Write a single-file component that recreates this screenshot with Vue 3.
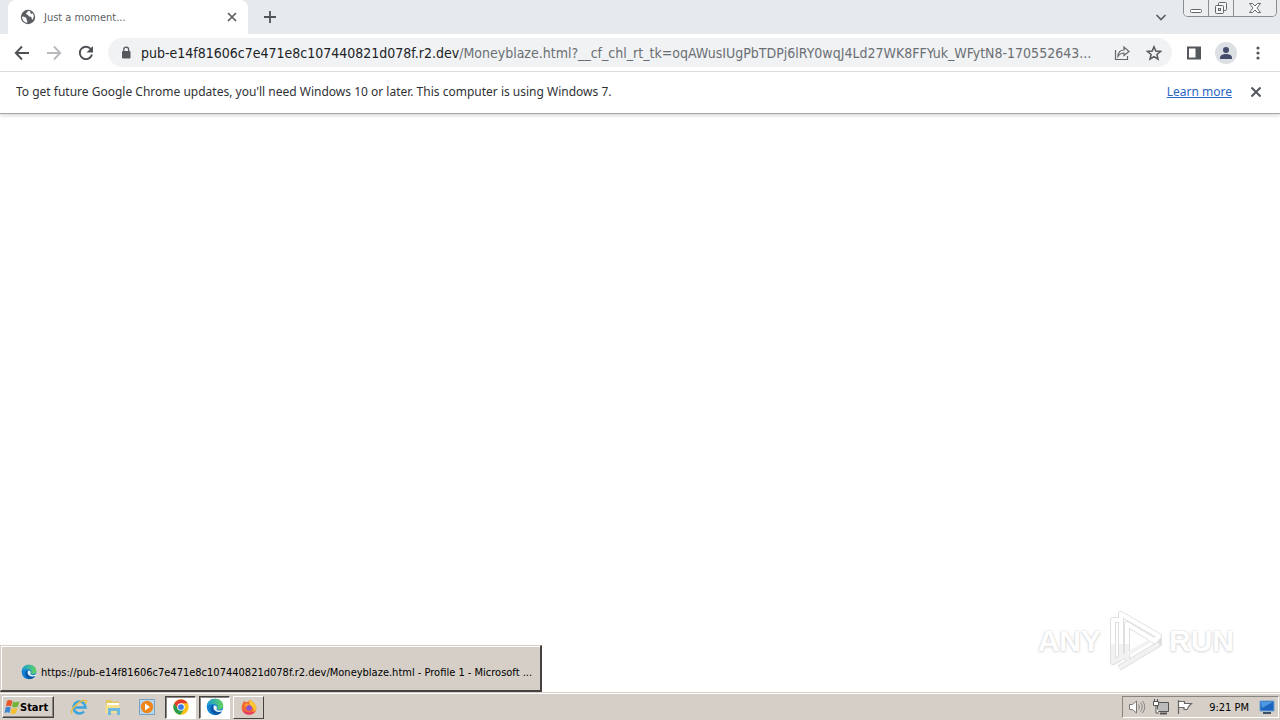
<script setup>
const host = 'pub-e14f81606c7e471e8c107440821d078f.r2.dev'
const path = '/Moneyblaze.html?__cf_chl_rt_tk=oqAWusIUgPbTDPj6lRY0wqJ4Ld27WK8FFYuk_WFytN8-170552643...'
</script>

<template>
  <div class="screen">
    <header class="tabs">
      <div class="tab">
        <svg class="globe" width="16" height="16" viewBox="0 0 16 16"><circle cx="8" cy="8" r="7.2" fill="#5a5e62" /><path d="M2.200 7.500c2 .2 4.600 1 4.300 2.500-.2 1 1 .8.8 3.700C4 13.500 2 11 2.200 7.500zM8 2c-.2 1.500-2 1.300-2 2.800 0 1.200 1.800.5 2.300 1.700.5 1.300 2.500.7 3.200 2 .4.8 0 2 1 2.300 1.700-2.300 1.500-5 .3-6.500-.8.6-1.700.8-2.200.1C10.200 3.700 10.500 2.800 10 2.300 9.300 2 8.600 1.900 8 2z" fill="#fff" /></svg>
        <span class="tab-title">Just a moment...</span>
        <button class="bare" aria-label="Close tab"><svg width="16" height="16" viewBox="0 0 16 16"><path d="M4 4l8 8M12 4l-8 8" stroke="#5a5e62" stroke-width="1.700" /></svg></button>
      </div>
      <button class="bare new" aria-label="New tab"><svg width="16" height="16" viewBox="0 0 16 16"><path d="M8 2v12M2 8h12" stroke="#505458" stroke-width="1.800" /></svg></button>
      <button class="bare search" aria-label="Search tabs"><svg width="16" height="16" viewBox="0 0 16 16"><path d="M3.500 6l4.500 4.500L12.500 6" fill="none" stroke="#5a5e62" stroke-width="1.700" /></svg></button>
      <div class="controls">
        <button aria-label="Minimize"><svg width="14" height="14" viewBox="0 0 14 14"><rect x="1.500" y="8.500" width="11" height="3" rx="1" fill="#fff" stroke="#63676b" /></svg></button>
        <button aria-label="Restore"><svg width="14" height="14" viewBox="0 0 14 14"><g fill="#f4f5f6" stroke="#63676b"><rect x="4.500" y="1.500" width="8" height="8" rx="1" /><rect x="1.500" y="4.500" width="8" height="8" rx="1" /><rect x="4.500" y="7.500" width="2" height="2" /></g></svg></button>
        <button aria-label="Close"><svg width="14" height="14" viewBox="0 0 14 14"><path d="M1.500 2.500h3L7 5l2.500-2.500h3L9 7l3.500 4.500h-3L7 9l-2.500 2.500h-3L5 7z" fill="#fff" stroke="#63676b" /></svg></button>
      </div>
    </header>

    <nav class="toolbar">
      <button class="bare" aria-label="Back"><svg width="16" height="16" viewBox="0 0 16 16"><path d="M15 8H2M8 1.500L1.800 8 8 14.500" fill="none" stroke="#4e5256" stroke-width="1.900" /></svg></button>
      <button class="bare" aria-label="Forward"><svg width="16" height="16" viewBox="0 0 16 16"><path d="M1 8h13M8 1.500L14.200 8 8 14.500" fill="none" stroke="#b8babd" stroke-width="1.900" /></svg></button>
      <button class="bare" aria-label="Reload"><svg width="16" height="16" viewBox="0 0 16 16"><path d="M13.200 4.500A6.200 6.200 0 1 0 14 9.500" fill="none" stroke="#4e5256" stroke-width="1.900" /><path d="M15 1v6.500H8.500z" fill="#4e5256" /></svg></button>
      <div class="omnibox">
        <svg class="lock" width="12" height="14" viewBox="0 0 12 14"><rect x="2" y="5" width="8.500" height="7.500" rx="1" fill="#55595d" /><path d="M3.800 6V3.600a2.400 2.400 0 0 1 4.800 0V6" fill="none" stroke="#55595d" stroke-width="1.300" /></svg>
        <span class="url"><b>{{ host }}</b>{{ path }}</span>
        <button class="bare share" aria-label="Share"><svg width="16" height="16" viewBox="0 0 16 16"><path d="M1.500 5v9.500h12V11M4 11.500C4 7 6.500 5 10 5V2l5 4.500-5 4V8C7.500 8 5.500 9 4 11.500z" fill="none" stroke="#63676b" stroke-width="1.200" /></svg></button>
        <button class="bare" aria-label="Bookmark"><svg width="16" height="16" viewBox="0 0 16 16"><path d="M8 1.800l1.800 4.300 4.700.4-3.600 3 1.100 4.700L8 11.700l-4 2.500 1.100-4.700-3.600-3 4.700-.4z" fill="none" stroke="#55595d" stroke-width="1.500" /></svg></button>
      </div>
      <button class="bare panel" aria-label="Side panel"><svg width="16" height="16" viewBox="0 0 16 16"><path d="M2 2.500h12v11H2z" fill="#fff" stroke="#55595d" stroke-width="2" /><path d="M9.500 2h5v12h-5z" fill="#55595d" /></svg></button>
      <button class="bare avatar" aria-label="Profile"><svg width="22" height="22" viewBox="0 0 22 22"><circle cx="11" cy="11" r="11" fill="#dcdfe3" /><circle cx="11" cy="8" r="3" fill="#434c6b" /><path d="M5 17v-1.500c0-2.500 3.500-3.500 6-3.500s6 1 6 3.500V17z" fill="#434c6b" /></svg></button>
      <button class="bare dots" aria-label="Menu"><svg width="16" height="16" viewBox="0 0 16 16"><g fill="#55595d"><circle cx="8" cy="3" r="1.600" /><circle cx="8" cy="8" r="1.600" /><circle cx="8" cy="13" r="1.600" /></g></svg></button>
    </nav>

    <div class="infobar">
      <span class="message">To get future Google Chrome updates, you'll need Windows 10 or later. This computer is using Windows 7.</span>
      <a href="#">Learn more</a>
      <button class="bare" aria-label="Dismiss"><svg width="16" height="16" viewBox="0 0 16 16"><path d="M3.500 3.500l9 9M12.500 3.500l-9 9" stroke="#505458" stroke-width="1.900" /></svg></button>
    </div>

    <main class="page">
      <div class="preview">
        <svg width="16" height="16" viewBox="0 0 24 24"><use href="#edge" /></svg>
        <span>https://pub-e14f81606c7e471e8c107440821d078f.r2.dev/Moneyblaze.html - Profile 1 - Microsoft ...</span>
      </div>
      <div class="watermark">
        <span>ANY</span>
        <svg width="60" height="66" viewBox="0 0 60 66"><g fill="none" stroke-linejoin="round"><g stroke="#dfdfdf" stroke-width="6"><path d="M16 52V6l38 22-4 5-28-17v36M14 12H8v42l8-4M14 60l40-24v-6" /></g><g stroke="#f2f2f2" stroke-width="4"><path d="M16 52V6l38 22-4 5-28-17v36M14 12H8v42l8-4 34-20M14 60l40-24" /></g><path d="M16 36V6l38 22-4 5-28-17v20M14 12H8v24" stroke="#fff" stroke-width="4" /></g></svg>
        <span>RUN</span>
      </div>
    </main>

    <footer class="taskbar">
      <button class="start">
        <svg width="16" height="16" viewBox="0 0 16 16"><path d="M3 2c2-1.500 3.500-1 5.500 0L7 7.500c-1.500-1-3-1-5 0z" fill="#e8572a" /><path d="M9 2.500c2 1 3.500 1 6.500-.5l-1.500 5.500C11.500 9 10 8.700 8 7.800z" fill="#76b53b" /><path d="M1.700 8.500c2-1.200 3.500-1 5 0L5.500 14c-1.500-1-3-1-5 0z" fill="#3c86d2" /><path d="M7.700 9c2 1 3.500 1 5.800-.3L12 14c-2 1.300-3.600 1.300-5.500.3z" fill="#f6c02c" /></svg>
        Start
      </button>
      <div class="quick">
        <button class="bare" aria-label="Internet Explorer"><svg width="18" height="18" viewBox="0 0 18 18"><path d="M4.500 9.500h11A6 6 0 1 0 14 13.500" fill="none" stroke="#3aa4dd" stroke-width="2.600" /><path d="M2 15.500C-1 12 11 1 16 2.500c1 .5.500 2-.5 3.500" fill="none" stroke="#e8bd48" stroke-width="1.500" /></svg></button>
        <button class="bare" aria-label="Explorer"><svg width="18" height="18" viewBox="0 0 18 18"><path d="M2 2h5l1 1.500h7V14H2z" fill="#e6c65e" /><path d="M3 5h12v2H3z" fill="#fff" /><path d="M1.500 7h14v8h-14z" fill="#f7df8b" /><path d="M4 17v-7h12v7h-3v-4H7v4z" fill="#6db9df" /></svg></button>
        <button class="bare" aria-label="Media Player"><svg width="18" height="18" viewBox="0 0 18 18"><path d="M1.500 1.500h15v15h-15z" fill="#b9d6ed" stroke="#73a2c8" /><circle cx="9" cy="9" r="6.200" fill="#ef861b" /><path d="M7 5.500v7L12 9z" fill="#fff" /></svg></button>
      </div>
      <button class="task active" aria-label="Chrome"><svg width="16" height="16" viewBox="0 0 24 24"><circle cx="12" cy="12" r="11.500" fill="#fbc116" /><path d="M2 6.300A11.500 11.500 0 0 0 11 23.500l6-9-10-1z" fill="#2b9e4b" /><path d="M2 6.300l5 8L12 6.500h10A11.500 11.500 0 0 0 2 6.300z" fill="#e33b2e" /><circle cx="12" cy="12" r="5.700" fill="#fff" /><circle cx="12" cy="12" r="4.300" fill="#397ce7" /></svg></button>
      <button class="task active" aria-label="Edge"><svg width="18" height="18" viewBox="0 0 24 24">
        <defs>
          <linearGradient id="edge-top" x1="0" x2="1"><stop offset="0" stop-color="#199bd8" /><stop offset="1" stop-color="#63d45a" /></linearGradient>
          <g id="edge"><circle cx="12" cy="12" r="11" fill="#1380d2" /><path d="M1 12C1 5 6 1 12 1c7 0 11 5 11 9 0 5-5 6.500-8.500 5 2-3 .5-7-4-7C5.500 8 2 9 1 12z" fill="url(#edge-top)" /><path d="M8 10c-5 6 1 14 8 12 2.500-.8 4.500-2.500 5.500-4.500C15 20 8.500 16 10 10z" fill="#0c58a8" /><path d="M11 10c2.500-.5 4.200 1.800 3.200 4.200-.8 2 2.500 3 5.500 2.300l3.300-1v2l-2 .5c-5 2-11-1-11-5 0-1.500.3-2.400 1-3z" fill="#e9f3f7" /></g>
        </defs><use href="#edge" /></svg></button>
      <button class="task" aria-label="Firefox"><svg width="16" height="16" viewBox="0 0 24 24"><path d="M3 6l1.500-3L8 5c2-1 4-1 5-4 5 3 10 7 10 13 0 6-5 9.500-11 9.500S1 19 1 13c0-3 .8-5 2-7z" fill="#f36a32" /><path d="M13 1c5 3 10 7 10 13 0 4-3 7.500-6 8.500 4-6 1-10-2-12-2-1.500-4-5-2-9.500z" fill="#fcc632" /><path d="M1.500 16C4 22 9 24 14 23.300 19 22.500 22 19 23 15c-2 4-6 6-11 5s-8-2-10.500-4z" fill="#e93c6d" /><circle cx="12" cy="13.500" r="4.200" fill="#8754d5" /><path d="M5 8c3-2 6-1 8 1-3 0-4 1-4 3-2 0-4-2-4-4z" fill="#fc9a33" /></svg></button>
      <div class="tray">
        <svg width="18" height="16" viewBox="0 0 18 16"><path d="M1.500 5.500h3L8.500 2v12l-4-3.500h-3z" fill="#fff" stroke="#777" /><path d="M10.500 5.500q2 2.500 0 5M12.500 3.500q3.500 4.500 0 9M14.500 2q4.500 6 0 12" fill="none" stroke="#888" /></svg>
        <svg width="18" height="16" viewBox="0 0 18 16"><path d="M5.500 3.500h11v9h-11z" fill="#bbb" stroke="#555" /><path d="M8 14.500h7" stroke="#555" stroke-width="2" /><path d="M1.500 2.500h5v4h-5zM2.500 0v2M5.500 0v2M4 7v7h3" fill="#fff" stroke="#555" /></svg>
        <svg width="18" height="16" viewBox="0 0 18 16"><path d="M2.500 1v14M2.500 2.500h6v2h7L13 7l-2 3.500H8V8.500H2.500" fill="#fff" stroke="#666" stroke-width="1.200" /></svg>
        <time>9:21 PM</time>
        <svg width="16" height="16" viewBox="0 0 16 16"><path d="M1 2h14v10H1z" fill="#1c64bd" stroke="#6da2d5" /><path d="M2 3h12L3 9z" fill="#4e9ae2" /><path d="M4 13h8v2H4z" fill="#3c4e68" /></svg>
      </div>
    </footer>
  </div>
</template>

<style>
body { margin: 0; }
</style>

<style scoped>
* { box-sizing: border-box; }
.screen { display: flex; flex-direction: column; min-height: 100vh; background: #fff; color: #303236; font-family: "DejaVu Sans Condensed", "DejaVu Sans", sans-serif; }
svg { display: block; flex: none; }
button { font: inherit; color: inherit; }
.bare { display: flex; flex: none; padding: 0; border: 0; background: none; }
.tabs { display: flex; height: 34px; background: #e7eaed; align-items: center; }
.tab { display: flex; align-items: center; align-self: stretch; width: 240px; margin-left: 8px; padding: 0 8px 0 12px; background: #fff; border-radius: 8px 8px 0 0; font-size: 11px; }
.tab-title { flex: 1; margin-left: 8px; color: #5c5f63; }
.new { margin-left: 14px; }
.search { margin-left: auto; margin-right: 14px; }
.controls { display: flex; align-self: flex-start; width: 94px; height: 17px; margin-right: 3px; border: 1px solid #8b8e91; border-top: 0; border-radius: 0 0 5px 5px; overflow: hidden; }
.controls button { display: flex; justify-content: center; align-items: center; flex: 1; padding: 0; border: 0; border-right: 1px solid #8b8e91; background: #eceef0; }
.controls button:last-child { flex: 0 0 42px; border-right: 0; }
.toolbar { display: flex; align-items: center; height: 38px; padding: 0 14px; gap: 16px; border-bottom: 1px solid #d9dbdd; }
.omnibox { display: flex; align-items: center; flex: 1; min-width: 0; height: 29px; margin-left: -2px; padding: 0 10px 0 12px; border-radius: 15px; background: #f0f2f4; }
.url { flex: 1; min-width: 0; margin-left: 9px; overflow: hidden; white-space: nowrap; font-size: 14px; color: #6b6f73; }
.url b { font-weight: 400; color: #202226; }
.share { margin-right: 16px; }
.panel { margin-left: -2px; }
.avatar { margin: 0 -3px; }
.infobar { display: flex; align-items: center; height: 42px; padding: 0 16px 2px; font: 12px "Noto Sans", sans-serif; border-bottom: 1px solid #a5a7a9; box-shadow: 0 2px 3px #ddd; }
.message { flex: 1; white-space: nowrap; }
.infobar a { margin-right: 16px; color: #2b67c4; }
.page { display: flex; flex: 1; align-items: flex-end; justify-content: space-between; }
.preview { display: flex; align-items: center; width: 542px; height: 47px; padding: 8px 14px 0 20px; gap: 4px; background: #d5cfc7; border: 1px solid #fff; border-color: #d5cfc7 #45423f #45423f #d5cfc7; border-right-width: 2px; border-bottom-width: 2px; box-shadow: inset 1px 1px #fff; color: #000; font-size: 11px; white-space: nowrap; }
.watermark { display: flex; align-items: center; gap: 4px; margin: 0 46px 18px 0; font: 700 30px "Liberation Sans", sans-serif; color: #fff; text-shadow: 0 0 2px #ccc, 0 1px 3px #ddd; }
.taskbar { display: flex; align-items: center; height: 28px; padding: 2px 1px 1px 2px; background: #d5cfc7; border-top: 1px solid #d5cfc7; box-shadow: inset 0 1px #fff; color: #000; font-size: 11px; }
.start { display: flex; align-items: center; width: 52px; height: 22px; padding: 0 1px; gap: 0; border: 1px solid; border-color: #fff #45423f #45423f #fff; background: #d5cfc7; font-weight: 700; box-shadow: inset -1px -1px #898580; }
.quick { display: flex; gap: 16px; margin: 0 9px 0 16px; }
.task { display: flex; align-items: center; justify-content: center; width: 31px; height: 23px; margin-right: 3px; padding: 0; border: 1px solid; border-color: #fff #45423f #45423f #fff; background: #d5cfc7; }
.task.active { border-color: #45423f #fff #fff #45423f; background: #fff; box-shadow: inset 1px 1px #898580; }
.tray { display: flex; align-items: center; height: 22px; margin-left: auto; padding: 0 3px 0 5px; gap: 6px; border: 1px solid; border-color: #898580 #fff #fff #898580; }
time { margin: 0 4px 0 9px; white-space: nowrap; }
</style>
